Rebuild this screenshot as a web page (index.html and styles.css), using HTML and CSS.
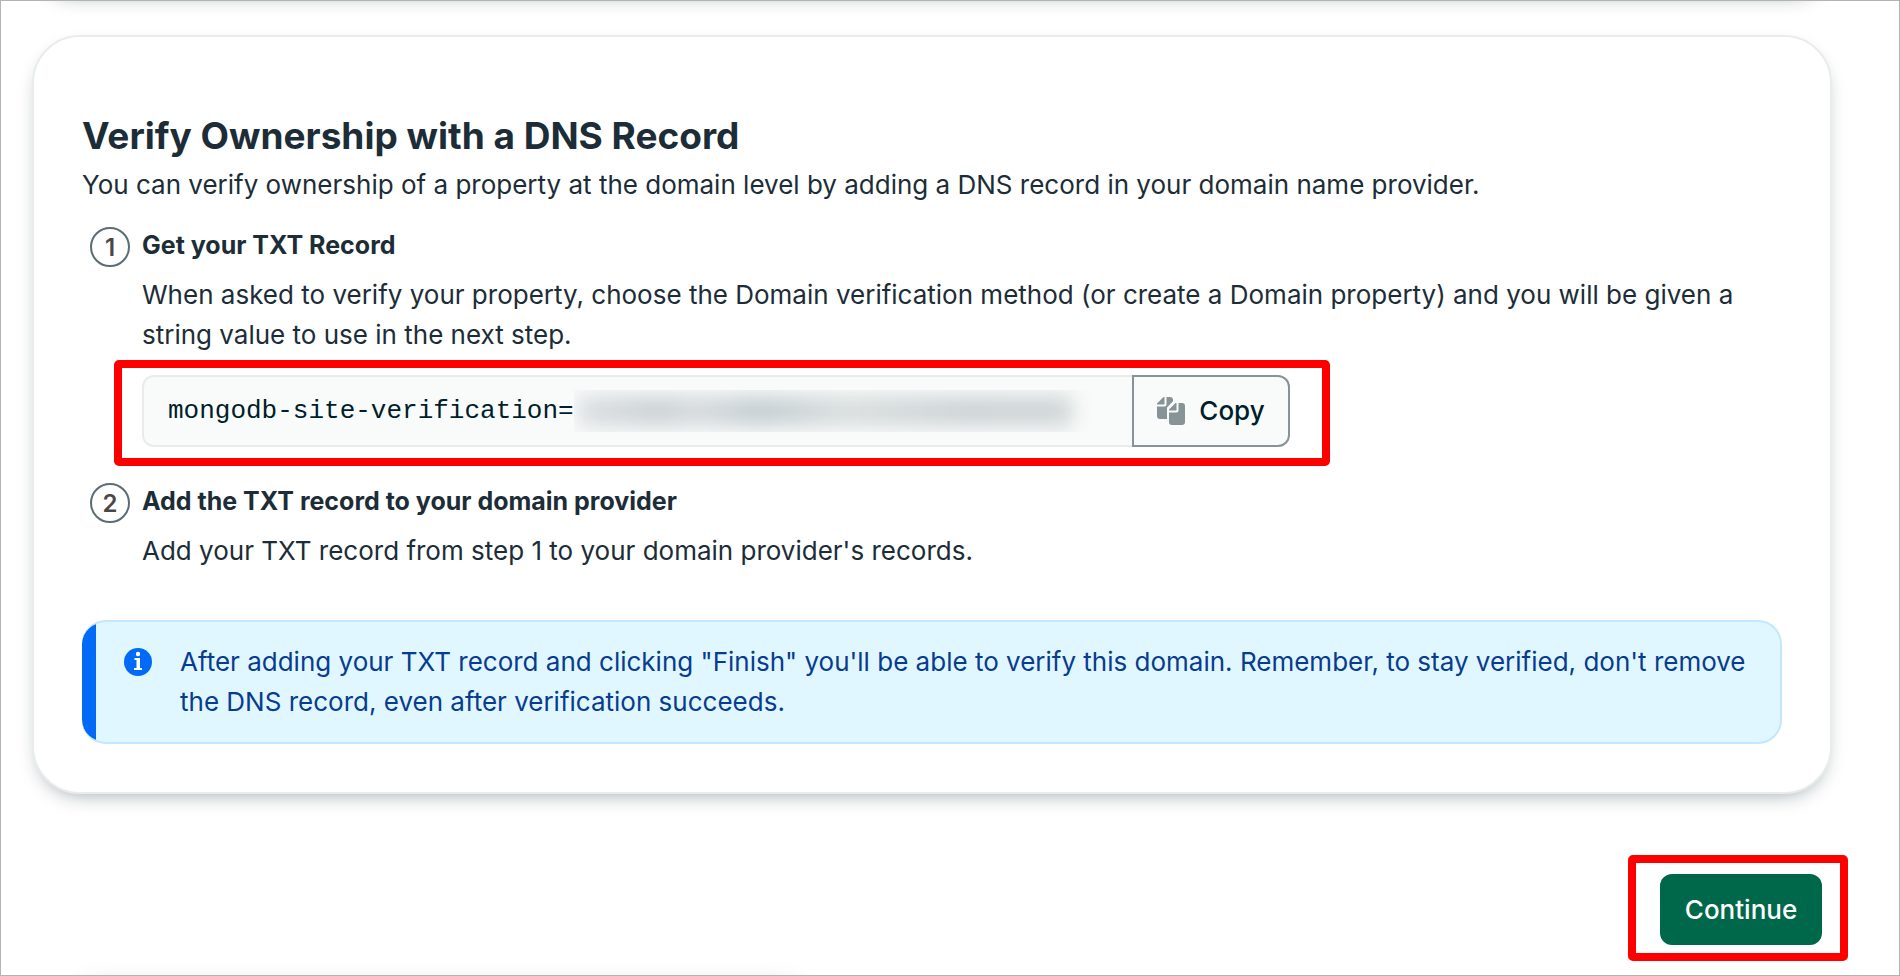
FILE: index.html
```html
<!DOCTYPE html>
<html lang="en">
<head>
<meta charset="utf-8">
<title>Verify Ownership with a DNS Record</title>
<link rel="stylesheet" href="styles.css">
</head>
<body>
<div class="page">
  <div class="edge edge-top"></div>
  <main class="content">
    <section class="card">
      <h1 class="title">Verify Ownership with a DNS Record</h1>
      <p class="lead">You can verify ownership of a property at the domain level by adding a DNS record in your domain name provider.</p>
      <ol class="steps">
        <li class="step">
          <span class="step-number">1</span>
          <div class="step-body">
            <h2 class="step-title">Get your TXT Record</h2>
            <p class="text">When asked to verify your property, choose the Domain verification method (or create a Domain property) and you will be given a string value to use in the next step.</p>
            <div class="copyable highlight">
              <div class="copyable-value"><code>mongodb-site-verification=</code><span class="redacted"></span></div>
              <button class="copy-button" type="button">
                <svg class="copy-icon" viewBox="0 0 28 28" aria-hidden="true">
                  <path d="M9.500 0H13a3 3 0 0 1 3 3v1.300L10 10.500V22H3a3 3 0 0 1-3-3V9.500h7.500a2 2 0 0 0 2-2zM7.500 0v7.500H0V6.500L6.500 0z"/>
                  <path d="M21.500 6H25a3 3 0 0 1 3 3v16a3 3 0 0 1-3 3H15a3 3 0 0 1-3-3V15.500h7.500a2 2 0 0 0 2-2zM19.500 6v7.500H12V12.500L18.500 6z"/>
                </svg>
                Copy
              </button>
            </div>
          </div>
        </li>
        <li class="step">
          <span class="step-number">2</span>
          <div class="step-body">
            <h2 class="step-title">Add the TXT record to your domain provider</h2>
            <p class="text">Add your TXT record from step 1 to your domain provider's records.</p>
          </div>
        </li>
      </ol>
      <div class="banner" role="note">
        <svg class="info-icon" viewBox="0 0 28 28" aria-hidden="true">
          <circle cx="14" cy="14" r="14" fill="#016bf8"/>
          <circle cx="14" cy="6" r="2.200" fill="#fff"/>
          <path d="M10.500 10H16v10h2v2h-8v-2h2.500v-8h-2z" fill="#fff"/>
        </svg>
        <p class="banner-text">After adding your TXT record and clicking "Finish" you'll be able to verify this domain. Remember, to stay verified, don't remove the DNS record, even after verification succeeds.</p>
      </div>
    </section>
    <div class="actions">
      <div class="highlight highlight-action">
        <button class="continue-button" type="button">Continue</button>
      </div>
    </div>
  </main>
  <div class="edge edge-bottom"></div>
</div>
</body>
</html>
```
FILE: styles.css
```css
* { box-sizing: border-box; }
body {
  margin: 0;
  background: #fff;
  color: #1c2d38;
  font-family: Inter, "Liberation Sans", sans-serif;
  font-size: 26px;
  line-height: 40px;
}
h1, h2, p, ol { margin: 0; padding: 0; }
button { font: inherit; cursor: pointer; }
.page {
  position: relative;
  min-height: 100vh;
  overflow: hidden;
  border: 1px solid #b3b3b3;
}
.content { padding: 34px 67px 0 31px; }
.edge { position: absolute; height: 80px; border-radius: 40px; }
.edge-top {
  top: -86px; left: 32px; right: 67px;
  box-shadow: 0 8px 20px -8px rgba(0, 30, 43, 0.4);
}
.edge-bottom {
  bottom: -88px; left: 60px; width: 40%;
  box-shadow: 0 0 24px rgba(0, 0, 0, 0.12);
}
.card {
  padding: 74px 48px 48px;
  border: 2px solid #e8edeb;
  border-radius: 48px;
  background: #fff;
  box-shadow: 0 8px 20px -8px rgba(0, 30, 43, 0.4);
}
.title { font-size: 37px; line-height: 50px; font-weight: 700; }
.lead { margin-top: 4px; }
.steps { list-style: none; margin-top: 20px; }
.step { display: flex; gap: 12px; padding-left: 8px; }
.step + .step { margin-top: 34px; }
.step-number {
  flex: none;
  width: 40px;
  height: 40px;
  margin-top: 2px;
  border: 2px solid #5c6c75;
  border-radius: 50%;
  color: #494747;
  font-size: 24px;
  font-weight: 600;
  line-height: 38px;
  text-align: center;
}
.step-body { flex: 1; }
.step-title { font-size: 25px; line-height: 40px; font-weight: 700; }
.text { margin-top: 10px; }
.highlight { position: relative; }
.highlight::after {
  content: "";
  position: absolute;
  inset: -15px -40px -19px -28px;
  border: 8px solid #f00;
  border-radius: 5px;
  pointer-events: none;
}
.copyable {
  display: flex;
  width: 1148px;
  max-width: 100%;
  height: 72px;
  margin-top: 20px;
}
.copyable-value {
  flex: 1;
  display: flex;
  align-items: center;
  padding-left: 24px;
  border: 2px solid #e8edeb;
  border-right: 0;
  border-radius: 12px 0 0 12px;
  background: #f9fbfa;
  color: #001e2b;
}
.copyable-value code { font-family: "Liberation Mono", monospace; font-size: 26px; }
.redacted {
  position: relative;
  width: 520px;
  height: 42px;
  overflow: hidden;
}
.redacted::before {
  content: "";
  position: absolute;
  inset: 6px 22px 6px 4px;
  background: linear-gradient(90deg, #dbdfe1, #cbd1d6 16%, #d5dadd 24%, #c4cdd2 37%, #d8dddd 54%, #cdd3d5 78%, #cfd5d6);
  filter: blur(10px);
}
.copy-button {
  display: flex;
  align-items: center;
  justify-content: center;
  gap: 14px;
  width: 158px;
  padding: 0;
  border: 2px solid #889397;
  border-radius: 0 12px 12px 0;
  background: #f9fbfa;
  color: #001e2b;
  font-weight: 500;
}
.copy-icon { width: 28px; height: 28px; fill: #889397; }
.banner {
  display: flex;
  gap: 28px;
  margin-top: 49px;
  padding: 20px 24px 20px 40px;
  border: 2px solid #c3e7fe;
  border-left: 0;
  border-radius: 24px;
  background: linear-gradient(90deg, #016bf8 14px, #e1f7ff 14px);
  color: #083c90;
}
.info-icon { flex: none; width: 28px; height: 28px; margin: 6px 0 0 2px; }
.banner-text { flex: 1; }
.actions { display: flex; justify-content: flex-end; padding: 80px 10px 0 0; }
.highlight-action::after { inset: -19px -26px -16px -32px; }
.continue-button {
  display: block;
  width: 162px;
  height: 71px;
  padding: 0;
  border: 0;
  border-radius: 12px;
  background: #00684a;
  color: #fff;
  font-weight: 500;
}
```
